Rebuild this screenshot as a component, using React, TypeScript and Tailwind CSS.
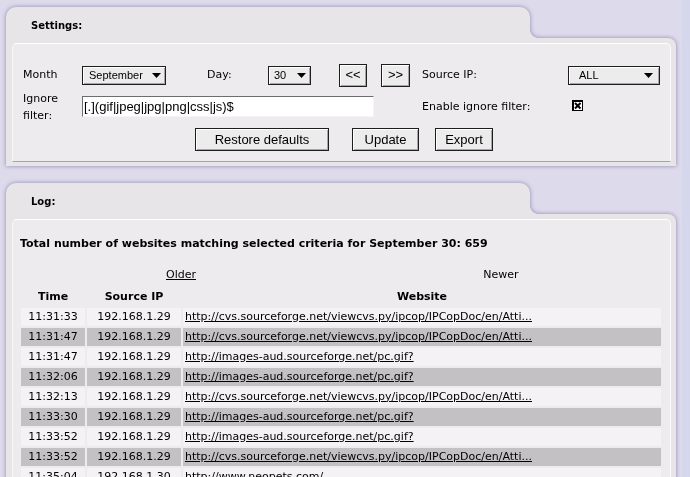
import React from "react";

const rows: [string, string, string][] = [
  ["11:31:33", "192.168.1.29", "http://cvs.sourceforge.net/viewcvs.py/ipcop/IPCopDoc/en/Atti..."],
  ["11:31:47", "192.168.1.29", "http://cvs.sourceforge.net/viewcvs.py/ipcop/IPCopDoc/en/Atti..."],
  ["11:31:47", "192.168.1.29", "http://images-aud.sourceforge.net/pc.gif?"],
  ["11:32:06", "192.168.1.29", "http://images-aud.sourceforge.net/pc.gif?"],
  ["11:32:13", "192.168.1.29", "http://cvs.sourceforge.net/viewcvs.py/ipcop/IPCopDoc/en/Atti..."],
  ["11:33:30", "192.168.1.29", "http://images-aud.sourceforge.net/pc.gif?"],
  ["11:33:52", "192.168.1.29", "http://images-aud.sourceforge.net/pc.gif?"],
  ["11:33:52", "192.168.1.29", "http://cvs.sourceforge.net/viewcvs.py/ipcop/IPCopDoc/en/Atti..."],
  ["11:35:04", "192.168.1.30", "http://www.neopets.com/"],
  ["11:35:04", "192.168.1.30", "http://www.neopets.com/"],
];

function Arrow() {
  return (
    <svg width="9" height="5" viewBox="0 0 9 5" className="shrink-0">
      <polygon points="0,0 9,0 4.5,5" fill="#000" />
    </svg>
  );
}

function Panel({ title, children }: { title: string; children: React.ReactNode }) {
  return (
    <div className="w-[670px] drop-shadow-[0_0_2px_rgba(110,100,150,0.7)]">
      <div className="flex items-end">
        <div className="w-[524px] h-[31px] rounded-t-[10px] bg-[#e8e5e9] pl-[25px] pt-[13px] text-[10px] font-bold leading-[12px] text-black font-['DejaVu_Sans',sans-serif]">
          {title}
        </div>
        <div className="w-[8px] h-[8px] bg-[radial-gradient(circle_at_100%_0%,transparent_7.5px,#e8e5e9_8px)]" />
      </div>
      <div className="bg-[#e8e5e9] rounded-tr-[8px] pt-[5px] pb-[4px] pl-[6px] pr-[5px]">
        <div className="rounded-t-[5px] border border-t-white border-l-[#f8f7fa] border-r-[#fbfafc] border-b-[#a8a4ab] bg-[#eeebef]">
          {children}
        </div>
      </div>
    </div>
  );
}

const btn =
  "flex items-center justify-center border border-[#1e1e1e] bg-[#ececec] shadow-[inset_1px_1px_0_#ffffff,inset_-1px_-1px_0_#a6a6a6] text-[13px] text-black font-['Liberation_Sans',Arial,sans-serif]";
const sel =
  "flex items-center justify-between border border-[#1e1e1e] bg-[#ececec] shadow-[inset_1px_1px_0_#ffffff,inset_-1px_-1px_0_#a6a6a6] text-[11px] text-black font-['Liberation_Sans',Arial,sans-serif] pr-[4px]";

export default function App() {
  return (
    <div className="flex min-h-[477px] bg-[#dcdaeb] font-['DejaVu_Sans',sans-serif] text-black text-[11px]">
      <div className="w-[682px] pt-[7px] pl-[6px] pb-[20px]">
        <Panel title="Settings:">
          <div className="pl-[10px]">
            {/* Row 1 */}
            <div className="mt-[19px] h-[24px] flex items-center">
              <div className="w-[59px] leading-[14px]">Month</div>
              <div className={sel + " w-[84px] h-[19px] pl-[6px]"}>
                <span>September</span>
                <Arrow />
              </div>
              <div className="w-[102px] pl-[41px] leading-[14px]">Day:</div>
              <div className={sel + " w-[43px] h-[19px] pl-[5px]"}>
                <span>30</span>
                <Arrow />
              </div>
              <div className={btn + " ml-[28px] w-[28px] h-[23px] text-[11px]"}>&lt;&lt;</div>
              <div className={btn + " ml-[14px] w-[29px] h-[23px] text-[11px]"}>&gt;&gt;</div>
              <div className="ml-[12px] w-[146px] leading-[14px]">Source IP:</div>
              <div className={sel + " w-[92px] h-[19px] pl-[10px] pr-[6px]"}>
                <span>ALL</span>
                <Arrow />
              </div>
            </div>
            {/* Row 2 */}
            <div className="mt-[3px] h-[33px] flex items-center">
              <div className="w-[59px] leading-[17px]">Ignore filter:</div>
              <div className="w-[292px] h-[21px] flex items-center bg-white border border-t-[#6e6c70] border-l-[#6e6c70] border-r-[#f4f4f4] border-b-[#f4f4f4] pl-[1px] text-[13px] font-['Liberation_Sans',Arial,sans-serif]">
                [.](gif|jpeg|jpg|png|css|js)$
              </div>
              <div className="ml-[48px] w-[150px] leading-[14px]">Enable ignore filter:</div>
              <svg width="11" height="11" viewBox="0 0 11 11" className="mb-[2px]">
                <rect x="0.5" y="0.5" width="10" height="10" fill="#fff" stroke="#000" />
                <rect x="0" y="0" width="11" height="2" fill="#000" />
                <rect x="0" y="0" width="2" height="11" fill="#000" />
                <line x1="3" y1="3" x2="8.5" y2="8.5" stroke="#000" strokeWidth="2" />
                <line x1="8.5" y1="3" x2="3" y2="8.5" stroke="#000" strokeWidth="2" />
              </svg>
            </div>
            {/* Row 3 */}
            <div className="mt-[5px] mb-[10px] h-[23px] flex items-center pl-[172px]">
              <div className={btn + " w-[134px] h-[23px]"}>Restore defaults</div>
              <div className={btn + " ml-[23px] w-[67px] h-[23px]"}>Update</div>
              <div className={btn + " ml-[16px] w-[58px] h-[23px]"}>Export</div>
            </div>
          </div>
        </Panel>

        <div className="mt-[17px]">
          <Panel title="Log:">
            <div className="pt-[17px] pl-[7px] font-bold leading-[14px]">
              Total number of websites matching selected criteria for September 30: 659
            </div>
            <div className="ml-[8px] w-[640px]">
              <div className="mt-[17px] flex leading-[14px]">
                <div className="w-[320px] text-center">
                  <span className="underline">Older</span>
                </div>
                <div className="w-[320px] text-center">Newer</div>
              </div>
              <div className="mt-[6px] grid grid-cols-[64px_94px_478px] gap-[2px] font-bold">
                <div className="h-[18px] flex items-center justify-center">Time</div>
                <div className="h-[18px] flex items-center justify-center">Source IP</div>
                <div className="h-[18px] flex items-center justify-center">Website</div>
              </div>
              <div className="mt-[2px] grid grid-cols-[64px_94px_478px] gap-[2px]">
                {rows.map((r, i) => {
                  const bg = i % 2 === 0 ? "bg-[#f4f2f5]" : "bg-[#c3c1c4]";
                  return (
                    <React.Fragment key={i}>
                      <div className={bg + " h-[18px] flex items-center justify-center"}>{r[0]}</div>
                      <div className={bg + " h-[18px] flex items-center justify-center"}>{r[1]}</div>
                      <div className={bg + " h-[18px] flex items-center pl-[2px]"}>
                        <span className="underline">{r[2]}</span>
                      </div>
                    </React.Fragment>
                  );
                })}
              </div>
            </div>
            <div className="h-[10px]" />
          </Panel>
        </div>
      </div>
      <div className="w-[8px] bg-[#d5d8ec]" />
    </div>
  );
}
